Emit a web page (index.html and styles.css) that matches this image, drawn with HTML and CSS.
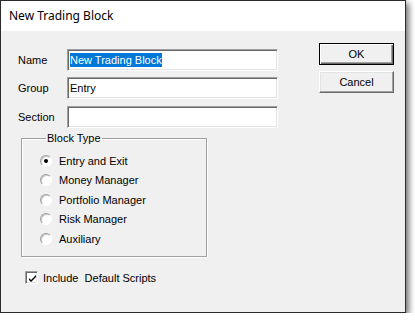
FILE: index.html
```html
<!DOCTYPE html>
<html lang="en">
<head>
    <meta charset="UTF-8">
    <title>New Trading Block</title>
    <link rel="stylesheet" href="styles.css">
</head>
<body>
    <div class="window">
        <div class="titlebar">New Trading Block</div>
        <div class="dialog">
            <div class="form">
                <div class="row">
                    <span class="label">Name</span>
                    <div class="field"><span class="selected">New Trading Block</span></div>
                </div>
                <div class="row">
                    <span class="label">Group</span>
                    <div class="field">Entry</div>
                </div>
                <div class="row row-last">
                    <span class="label">Section</span>
                    <div class="field"></div>
                </div>

                <fieldset class="group">
                    <legend>Block Type</legend>
                    <div class="radio"><span class="dot checked"></span>Entry and Exit</div>
                    <div class="radio"><span class="dot"></span>Money Manager</div>
                    <div class="radio"><span class="dot"></span>Portfolio Manager</div>
                    <div class="radio"><span class="dot"></span>Risk Manager</div>
                    <div class="radio"><span class="dot"></span>Auxiliary</div>
                </fieldset>

                <div class="check">
                    <span class="box">
                        <svg width="9" height="9" viewBox="0 0 9 9"><path d="M1 4 L3 6 L8 1 L8 3 L3 8 L1 6 Z" fill="#000"/></svg>
                    </span>
                    Include&nbsp; Default Scripts
                </div>
            </div>

            <div class="buttons">
                <button class="default">OK</button>
                <button>Cancel</button>
            </div>
        </div>
    </div>
</body>
</html>
```

FILE: styles.css
```css
body {
    margin: 0;
    background: #fff;
    font-family: "Liberation Sans", Arial, sans-serif;
    font-size: 11px;
    color: #000;
}
.window {
    box-sizing: border-box;
    width: 406px;
    height: 313px;
    border: 1px solid #2b2b2b;
    background: #f0f0f0;
    box-shadow: 3px 3px 6px rgba(0, 0, 0, 0.55);
}
.titlebar {
    height: 30px;
    background: #fff;
    padding-left: 8px;
    font-family: "Noto Sans", "Open Sans", sans-serif;
    font-size: 12px;
    line-height: 30px;
    color: #000;
}
.dialog {
    display: flex;
    justify-content: space-between;
    padding: 12px 11px 0 17px;
}
.form {
    padding-top: 6px;
}
.row {
    display: flex;
    align-items: center;
    height: 22px;
    margin-bottom: 6px;
}
.row-last {
    margin-top: 7px;
    margin-bottom: 0;
}
.label {
    width: 49px;
}
.field {
    box-sizing: border-box;
    width: 211px;
    height: 22px;
    background: #fff;
    border: 1px solid;
    border-color: #a0a0a0 #fff #fff #a0a0a0;
    box-shadow: inset 1px 1px 0 #696969, inset -1px -1px 0 #e3e3e3;
    padding: 3px 0 0 2px;
    line-height: 14px;
}
.selected {
    background: #0078d7;
    color: #fff;
    padding: 1px 0;
}
.group {
    box-sizing: border-box;
    width: 186px;
    height: 125px;
    margin: 4px 0 0 3px;
    padding: 6px 0 0 18px;
    border: 1px solid #a0a0a0;
    box-shadow: inset 1px 1px 0 #fff, 1px 1px 0 #fff;
}
.group legend {
    padding: 0 1px;
    margin-left: 6px;
    line-height: 13px;
}
.radio {
    display: flex;
    align-items: center;
    height: 19.5px;
}
.dot {
    box-sizing: border-box;
    width: 12px;
    height: 12px;
    margin-right: 7px;
    border-radius: 50%;
    background: #fff;
    border: 1px solid;
    border-color: #a0a0a0 #fff #fff #a0a0a0;
    box-shadow: inset 1px 1px 0 #c8c8c8;
    display: flex;
    align-items: center;
    justify-content: center;
}
.dot.checked::after {
    content: "";
    width: 4px;
    height: 4px;
    border-radius: 50%;
    background: #000;
}
.check {
    display: flex;
    align-items: center;
    margin: 14px 0 0 7px;
}
.box {
    box-sizing: border-box;
    width: 13px;
    height: 13px;
    margin-right: 5px;
    background: #fff;
    border: 1px solid;
    border-color: #a0a0a0 #fff #fff #a0a0a0;
    box-shadow: inset 1px 1px 0 #696969, inset -1px -1px 0 #e3e3e3;
    display: flex;
    align-items: center;
    justify-content: center;
}
.box svg {
    margin: 1px 0 0 1px;
}
.buttons {
    display: flex;
    flex-direction: column;
    gap: 6px;
}
.buttons button {
    box-sizing: border-box;
    width: 75px;
    height: 22px;
    font-family: "Liberation Sans", Arial, sans-serif;
    font-size: 11px;
    color: #000;
    background: #f0f0f0;
    border: 1px solid;
    border-color: #fff #696969 #696969 #fff;
    box-shadow: inset -1px -1px 0 #a0a0a0, inset 1px 1px 0 #e3e3e3;
    padding: 0;
}
.buttons button.default {
    border: 1px solid #000;
    box-shadow: inset 1px 1px 0 #fff, inset -1px -1px 0 #696969, inset -2px -2px 0 #a0a0a0;
}
```
